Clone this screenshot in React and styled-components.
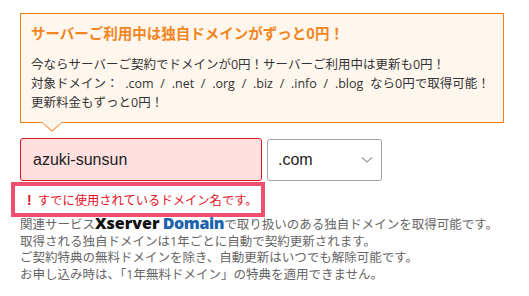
import React from "react";
import styled, { createGlobalStyle } from "styled-components";

const GlobalStyle = createGlobalStyle`
  html, body {
    margin: 0;
    background: #fff;
  }
  body {
    font-family: "Open Sans", "Noto Sans CJK JP", sans-serif;
  }
`;

const Page = styled.div`
  padding: 13px 0 0 20px;
  width: 529px;
  height: 296px;
  box-sizing: border-box;
  overflow: hidden;
`;

const Notice = styled.div`
  position: relative;
  width: 484px;
  box-sizing: border-box;
  border: 1px solid #f07d16;
  background: #fff7ee;
  padding: 9px 10px 10px 10px;

  &::before,
  &::after {
    content: "";
    position: absolute;
    left: 20px;
    width: 0;
    height: 0;
    border-left: 11px solid transparent;
    border-right: 11px solid transparent;
  }
  &::before {
    bottom: -10px;
    border-top: 10px solid #f5a25c;
  }
  &::after {
    bottom: -8px;
    border-top: 9px solid #fff7ee;
  }
`;

const NoticeTitle = styled.div`
  color: #f28520;
  font-family: "Noto Sans CJK JP", sans-serif;
  font-weight: 700;
  font-size: 14.5px;
  line-height: 20px;
  margin-bottom: 12px;
`;

const NoticeBody = styled.p`
  margin: 0;
  color: #333;
  font-size: 12.5px;
  line-height: 19px;
  word-spacing: 3.5px;
`;

const InputRow = styled.div`
  display: flex;
  align-items: center;
  gap: 5px;
  margin-top: 15px;
`;

const DomainInput = styled.div`
  width: 242px;
  height: 43px;
  box-sizing: border-box;
  border: 1px solid #e3151f;
  border-radius: 3px;
  background: #ffdfe0;
  padding-left: 12px;
  display: flex;
  align-items: center;
  font-family: "Liberation Sans", Arial, sans-serif;
  font-size: 16px;
  color: #222;
`;

const TldSelect = styled.div`
  width: 115px;
  height: 42px;
  box-sizing: border-box;
  border: 1px solid #a3a3a3;
  border-radius: 3px;
  background: #fff;
  padding: 0 8px 0 10px;
  display: flex;
  align-items: center;
  justify-content: space-between;
  font-family: "Liberation Sans", Arial, sans-serif;
  font-size: 16px;
  color: #222;
`;

const ErrorBox = styled.div`
  width: 254px;
  height: 35px;
  box-sizing: border-box;
  margin: 1px 0 -2px -9px;
  border: 4px solid #f14f70;
  display: flex;
  align-items: center;
  gap: 6px;
  padding-left: 12px;
  color: #e60f1e;
  font-family: "Noto Sans CJK JP", sans-serif;
  font-size: 12.3px;
  white-space: nowrap;
`;

const Bang = styled.span`
  font-family: "Liberation Sans", Arial, sans-serif;
  font-weight: 700;
  font-size: 14px;
`;

const Info = styled.p`
  margin: 0;
  color: #666;
  font-size: 12.5px;
  line-height: 16.6px;
`;

const Logo = styled.span`
  font-family: "Open Sans", "Liberation Sans", sans-serif;
  font-weight: 800;
  font-size: 16px;
  line-height: 1;
  color: ${(p) => p.$color};
  letter-spacing: ${(p) => p.$spacing || "0"};
`;

const Chevron = () => (
  <svg width="12" height="8" viewBox="0 0 12 8">
    <path d="M1 1.5 L6 6 L11 1.5" fill="none" stroke="#9a9a9a" strokeWidth="1.2" />
  </svg>
);

export default function App() {
  return (
    <>
      <GlobalStyle />
      <Page>
        <Notice>
          <NoticeTitle>サーバーご利用中は独自ドメインがずっと0円！</NoticeTitle>
          <NoticeBody>
            今ならサーバーご契約でドメインが0円！サーバーご利用中は更新も0円！
            <br />
            対象ドメイン： .com / .net / .org / .biz / .info / .blog なら0円で取得可能！
            <br />
            更新料金もずっと0円！
          </NoticeBody>
        </Notice>
        <InputRow>
          <DomainInput>azuki-sunsun</DomainInput>
          <TldSelect>
            .com
            <Chevron />
          </TldSelect>
        </InputRow>
        <ErrorBox>
          <Bang>!</Bang>
          すでに使用されているドメイン名です。
        </ErrorBox>
        <Info>
          関連サービス<Logo $color="#111">Xserver</Logo> <Logo $color="#1d62ad" $spacing="-0.4px">Domain</Logo>で取り扱いのある独自ドメインを取得可能です。
          <br />
          取得される独自ドメインは1年ごとに自動で契約更新されます。
          <br />
          ご契約特典の無料ドメインを除き、自動更新はいつでも解除可能です。
          <br />
          お申し込み時は、「1年無料ドメイン」の特典を適用できません。
        </Info>
      </Page>
    </>
  );
}
